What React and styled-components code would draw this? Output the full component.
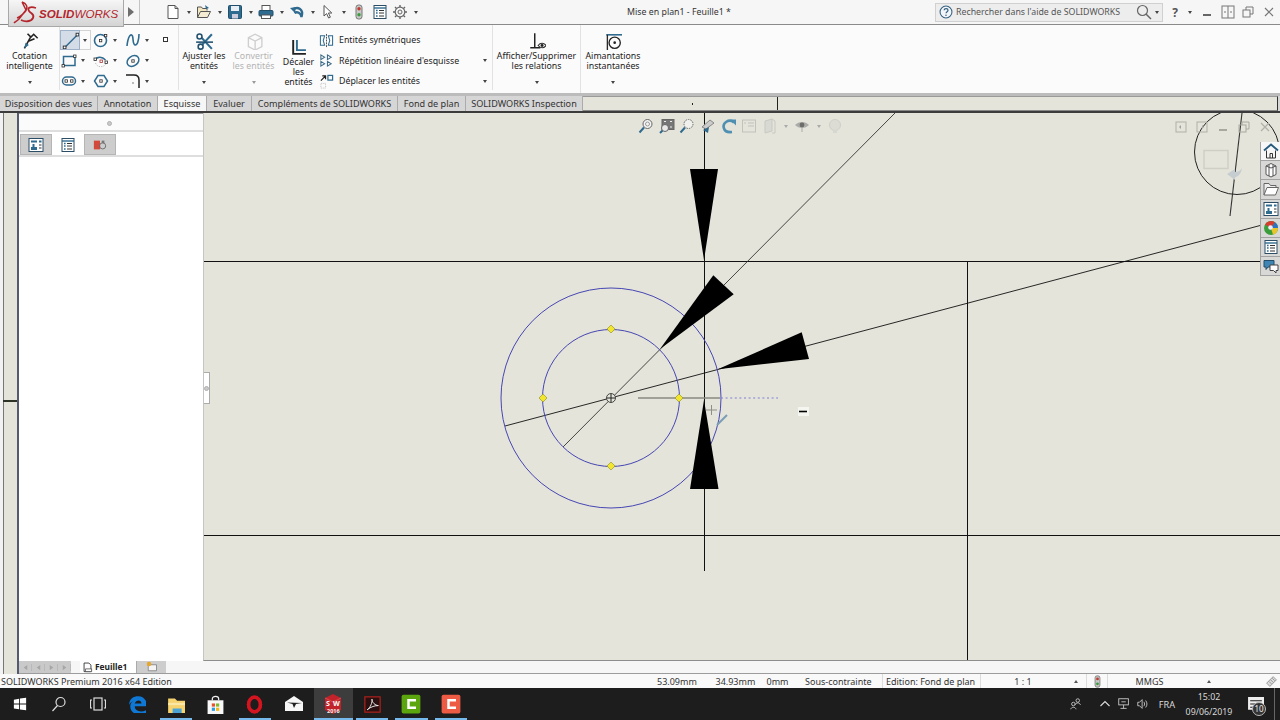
import React from 'react'
import styled, { createGlobalStyle } from 'styled-components'

const UI_FONT = '"Noto Sans", "Open Sans", "Liberation Sans", sans-serif'
const TEAL = '#2f6a8f'
const INK = '#2a2a2a'

const Global = createGlobalStyle`
  html, body { margin: 0; padding: 0; background: #1c1c1c; }
  #root { width: 1280px; height: 720px; }
  * { box-sizing: border-box; }
`

const Page = styled.div`
  width: 1280px;
  height: 720px;
  overflow: hidden;
  display: flex;
  flex-direction: column;
  font-family: ${UI_FONT};
  font-size: 8.8px;
  color: #222;
  background: #f4f4f4;
`

const Glyph = styled.svg.attrs(p => ({ viewBox: p.$box || '0 0 16 16', fill: 'none' }))`
  width: ${p => p.$size || 16}px;
  height: ${p => p.$size || 16}px;
  flex: none;
  display: block;
  opacity: ${p => p.$fade || 1};
`

const Caret = styled.span`
  flex: none;
  width: 0;
  height: 0;
  border-left: 2.5px solid transparent;
  border-right: 2.5px solid transparent;
  border-top: 3px solid ${p => p.$color || '#444'};
`

const CaretUp = styled(Caret)`
  border-top: 0;
  border-bottom: 3px solid #555;
`

/* title bar */
const TitleBar = styled.header`
  height: 25px;
  flex: none;
  display: flex;
  align-items: center;
  background: #f6f6f6;
  border-bottom: 1px solid #8a8a8a;
  padding-left: 8px;
`

const LogoTab = styled.div`
  width: 116px;
  height: 27px;
  flex: none;
  align-self: flex-start;
  display: flex;
  align-items: center;
  gap: 2px;
  padding-left: 4px;
  background: linear-gradient(#f6f6f6, #d4d4d4);
  border: 1px solid #a8a8a8;
  border-top: 0;
  position: relative;
  z-index: 2;
`

const LogoText = styled.span`
  font-family: "Liberation Sans", sans-serif;
  font-style: italic;
  font-size: 11.6px;
  color: #b3262c;
  b { font-weight: 700; }
`

const ExpandArrow = styled.div`
  width: 0;
  height: 0;
  flex: none;
  margin-left: 4px;
  border-left: 6px solid #6e6e6e;
  border-top: 5px solid transparent;
  border-bottom: 5px solid transparent;
`

const GripLine = styled.div`
  width: 1px;
  height: 24px;
  flex: none;
  margin-left: 5px;
  background: #c4c4c4;
`

const QuickBar = styled.div`
  width: 283px;
  flex: none;
  display: flex;
  align-items: center;
  padding-left: 25px;
`

const QuickItem = styled.div`
  width: ${p => p.$w || 31.3}px;
  display: flex;
  align-items: center;
  justify-content: space-between;
  padding-right: ${p => p.$caret ? 5 : 0}px;
`

const DocTitle = styled.div`
  width: 512px;
  flex: none;
  text-align: center;
  color: #333;
`

const SearchBox = styled.div`
  width: 228px;
  height: 19px;
  flex: none;
  display: flex;
  align-items: center;
  gap: 3px;
  padding: 0 3px;
  background: #ededed;
  border: 1px solid #d0d0d0;
  color: #555;
`

const SearchLabel = styled.span`
  flex: 1;
  white-space: nowrap;
`

const WinButtons = styled.div`
  display: flex;
  align-items: center;
`

const WinSlot = styled.div`
  width: ${p => p.$w || 20.5}px;
  height: 20px;
  flex: none;
  display: flex;
  align-items: center;
  justify-content: center;
  color: #555;
  font-weight: 700;
  font-size: 12px;
`

/* ribbon */
const Ribbon = styled.div`
  height: 68px;
  flex: none;
  display: flex;
  background: #fbfbfb;
`

const ColumnButton = styled.div`
  width: ${p => p.$w}px;
  flex: none;
  display: flex;
  flex-direction: column;
  align-items: center;
  padding-top: ${p => p.$top || 7}px;
  padding-bottom: 9px;
  line-height: 10px;
  text-align: center;
  white-space: nowrap;
  color: ${p => p.$muted ? '#b4b4b4' : '#222'};
  border-right: ${p => p.$divider ? '1px solid #e2e2e2' : '0'};
  ${Caret} { margin-top: auto; }
`

const ButtonLabel = styled.span`
  margin-top: 1px;
`

const SketchGrid = styled.div`
  width: 120px;
  flex: none;
  display: grid;
  grid-template-columns: 32px 32px 32px 16px;
  grid-auto-rows: 20.5px;
  padding-top: 5px;
  border-left: 1px solid #e2e2e2;
  border-right: 1px solid #e2e2e2;
  margin-bottom: 3px;
`

const ToolCell = styled.div`
  display: flex;
  align-items: center;
  gap: 4px;
  padding-left: ${p => p.$pad || 1}px;
`

const ActiveTool = styled.div`
  width: 20px;
  height: 20px;
  margin-left: -1px;
  display: flex;
  align-items: center;
  justify-content: center;
  background: #d3dce7;
  border: 1px solid #9db2c8;
`

const CaretBox = styled.div`
  width: 11px;
  height: 20px;
  display: flex;
  align-items: center;
  justify-content: center;
  margin-left: -4px;
  border: 1px solid #d4d4d4;
  border-left: 0;
`

const ToolList = styled.div`
  width: 174px;
  flex: none;
  padding-top: 5px;
  border-right: 1px solid #e2e2e2;
  margin-bottom: 3px;
`

const ToolRow = styled.div`
  height: 20.5px;
  display: flex;
  align-items: center;
  gap: 5px;
  padding-right: 5px;
  white-space: nowrap;
  ${Caret} { margin-left: auto; }
`

/* command manager tabs */
const TabStrip = styled.nav`
  height: 20px;
  flex: none;
  display: flex;
  background: #d6d6d6;
  border-top: 3px solid #bcbcbc;
  border-bottom: 2px solid #3c3c3c;
  font-size: 9.1px;
`

const Tab = styled.div`
  width: ${p => p.$w}px;
  flex: none;
  display: flex;
  align-items: center;
  justify-content: center;
  white-space: nowrap;
  color: #333;
  background: ${p => p.$active ? '#f6f6f6' : '#d6d6d6'};
  border-right: 1px solid #ababab;
`

const TabFiller = styled.div`
  width: 695px;
  flex: none;
  display: flex;
  align-items: center;
  background: #e4e4da;
  border-top: 1px solid #9a9a9a;
  border-right: 1px solid #333;
  border-bottom: 1px solid #888;
`

const Tick = styled.span`
  width: 1px;
  height: 2px;
  margin-left: 109px;
  background: #222;
`

const StripLine = styled.span`
  width: 1px;
  align-self: stretch;
  margin-left: 84px;
  background: #222;
`

/* workspace */
const Workspace = styled.div`
  height: 561px;
  flex: none;
  display: flex;
`

const DockRail = styled.div`
  width: 19px;
  flex: none;
  padding-top: 287px;
  background: #e4e4da;
  border-left: 3px solid #f2f2f2;
  box-shadow: inset 1px 0 0 #777;
  border-right: 2px solid #555a70;
`

const RailMark = styled.div`
  height: 2px;
  background: #2d3326;
`

const WorkColumn = styled.div`
  flex: 1;
  display: flex;
  flex-direction: column;
  min-width: 0;
`

const WorkRow = styled.div`
  height: 548px;
  flex: none;
  display: flex;
`

const Panel = styled.aside`
  width: 184px;
  flex: none;
  background: #fff;
  border-top: 1px solid #9a9a9a;
`

const PanelGrip = styled.div`
  height: 18px;
  display: flex;
  align-items: flex-end;
  justify-content: center;
  padding: 0 4px 4px 0;
  background: #fbfbfb;
  border-bottom: 2px solid #dedede;
`

const Dot = styled.span`
  width: 5px;
  height: 5px;
  border-radius: 50%;
  background: #c9c9c9;
  border: 1px solid #b0b0b0;
`

const PanelTabs = styled.div`
  height: 25px;
  display: flex;
  padding: 2px 0 0 1px;
  border-bottom: 2px solid #dedede;
`

const PanelTab = styled.div`
  width: 32px;
  display: flex;
  align-items: center;
  justify-content: center;
  background: ${p => p.$on ? '#fff' : '#cdcdcd'};
  border: 1px solid ${p => p.$on ? '#fff' : '#b5b5b5'};
`

const Canvas = styled.main`
  position: relative;
  flex: 1;
  min-width: 0;
  background: #e4e4da;
  border-left: 1px solid #c6c6c0;
  border-bottom: 1px solid #8d8d8d;
  overflow: hidden;
`

const Sketch = styled.svg`
  display: block;
  width: 1076px;
  height: 547px;
`

const ViewBar = styled.div`
  position: absolute;
  top: 5px;
  left: 432px;
  display: flex;
  align-items: center;
`

const ViewSlot = styled.div`
  width: ${p => p.$w || 20.6}px;
  height: 16px;
  display: flex;
  align-items: center;
  justify-content: center;
`

const ViewControls = styled.div`
  position: absolute;
  top: 4px;
  right: 5px;
  display: flex;
`

const RightTabs = styled.div`
  position: absolute;
  top: 29px;
  right: 0;
  width: 20px;
`

const RightTab = styled.div`
  height: 19.2px;
  display: flex;
  align-items: center;
  justify-content: center;
  background: ${p => p.$on ? '#f7f7f7' : '#d8d8d6'};
  border: 1px solid #a2a2a2;
  border-top: 0;
  border-right: 0;
`

const SideHandle = styled.div`
  position: absolute;
  left: 0;
  top: 259px;
  width: 6px;
  height: 32px;
  display: flex;
  align-items: center;
  justify-content: center;
  background: #fff;
  border: 1px solid #ababab;
  border-left: 0;
`

const SheetBar = styled.div`
  height: 13px;
  flex: none;
  display: flex;
  align-items: stretch;
  background: #f6f6f6;
  border-bottom: 1px solid #9c9c9c;
`

const SheetNav = styled.div`
  width: 52px;
  display: flex;
  align-items: center;
  background: #c9c9c9;
  color: #a8a8a8;
`

const NavCell = styled.span`
  flex: 1;
  display: flex;
  align-items: center;
  justify-content: center;
  border-right: 1px solid #b9b9b9;
`

const SheetTab = styled.div`
  width: 56px;
  margin-left: 9px;
  display: flex;
  align-items: center;
  gap: 2px;
  padding-left: 2px;
  background: #fff;
  font-weight: 700;
  font-size: 8.4px;
  color: #222;
  line-height: 1;
`

const AddSheet = styled.div`
  width: 30px;
  display: flex;
  align-items: center;
  justify-content: center;
  background: #cdcdcd;
  border-left: 1px solid #aaa;
`

/* status bar */
const StatusBar = styled.footer`
  height: 14px;
  flex: none;
  display: flex;
  align-items: center;
  background: #f9f9f9;
  white-space: nowrap;
  color: #333;
  font-size: 9px;
`

const StatusCell = styled.div`
  width: ${p => p.$w}px;
  flex: none;
  height: 14px;
  display: flex;
  align-items: center;
  justify-content: ${p => p.$center ? 'center' : 'flex-start'};
  padding-left: ${p => p.$pad || 0}px;
  border-right: ${p => p.$line ? '1px solid #dcdcdc' : '0'};
`

/* taskbar */
const Taskbar = styled.div`
  height: 32px;
  flex: none;
  display: flex;
  align-items: stretch;
  background: #1d1d1d;
  color: #d9d9d9;
`

const TaskButton = styled.div`
  width: 39.2px;
  flex: none;
  display: flex;
  align-items: center;
  justify-content: center;
  position: relative;
  background: ${p => p.$active ? '#3d3d3d' : 'transparent'};
  &::after {
    content: '';
    display: ${p => p.$running ? 'block' : 'none'};
    position: absolute;
    left: ${p => p.$active ? 0 : 9}%;
    right: ${p => p.$active ? 0 : 9}%;
    bottom: 0;
    height: 2px;
    background: #76b9ed;
  }
`

const Tray = styled.div`
  margin-left: auto;
  display: flex;
  align-items: stretch;
`

const TraySlot = styled.div`
  width: ${p => p.$w}px;
  display: flex;
  align-items: center;
  justify-content: center;
  position: relative;
  padding-right: ${p => p.$pr || 0}px;
  font-size: 9.2px;
`

const Clock = styled.div`
  text-align: center;
  line-height: 15px;
  font-size: 8.8px;
  padding-top: 1px;
`

const Badge = styled.span`
  position: absolute;
  right: 8px;
  bottom: 4px;
  width: 14px;
  height: 14px;
  border-radius: 50%;
  background: #333;
  border: 1px solid #bbb;
  font-size: 8px;
  line-height: 12px;
  text-align: center;
  color: #eee;
`

const ShowDesktop = styled.div`
  width: 6px;
  border-left: 1px solid #666;
`

/* ---- icons ---- */
const Handle = ({ x, y, c = INK }) => <rect x={x} y={y} width="2.4" height="2.4" fill="#fff" stroke={c} strokeWidth=".8" />

const DsMark = () => (
  <Glyph $box="0 0 24 24" $size={24}>
    <path d="M9 1 L13 9 L6 18 C4 20 2 21 1 22 M9 1 C13 2 16 6 12 11 M4 17 C7 16 10 14 13 9" stroke="#b3262c" strokeWidth="1.5" />
    <path d="M23 7 C17 5 14 7 16 10 C18 13 22 13 20 17 C18 21 12 21 8 19" stroke="#b3262c" strokeWidth="1.8" />
  </Glyph>
)

const NewDoc = () => <Glyph><path d="M3 1.5h7l3 3v10H3z" fill="#fff" stroke="#555" /><path d="M10 1.5v3h3" stroke="#555" /></Glyph>
const OpenFile = () => <Glyph><path d="M1.5 13.5V3h4l1 1.5H11v2" fill="#f3e7c2" stroke="#555" /><path d="M1.5 13.5l3-6h10l-3 6z" fill="#f5edd3" stroke="#555" /><path d="M9 1l4 3-3 1z" fill={TEAL} /></Glyph>
const SaveFile = () => <Glyph><rect x="1.5" y="1.5" width="13" height="13" rx="1" fill={TEAL} stroke="#234e6a" /><rect x="4" y="2" width="8" height="5" fill="#e8eef3" /><rect x="5" y="10" width="6" height="4.5" fill="#ccd" /></Glyph>
const PrintFile = () => <Glyph><rect x="4" y="1.5" width="8" height="5" fill="#fff" stroke="#555" /><rect x="1" y="6.5" width="14" height="5.5" rx="1" fill={TEAL} stroke="#234e6a" /><rect x="3.5" y="11" width="9" height="3.5" fill="#fff" stroke="#555" /></Glyph>
const UndoArrow = () => <Glyph><path d="M3.5 5.5 C9 2 15 5 12.5 13 C12 9 8 7 5.5 9" stroke={TEAL} strokeWidth="2.4" /><path d="M1 4l6-1-1 6z" fill={TEAL} /></Glyph>
const Pointer = () => <Glyph><path d="M4 1.5v10.5l2.6-2.4 2 4.4 1.8-.8-2-4.2h3.4z" fill="#fff" stroke="#555" /></Glyph>
const Traffic = ({ size = 16 }) => <Glyph $size={size}><rect x="5" y="1" width="6" height="14" rx="2.5" fill="#c8c8c8" stroke="#777" /><circle cx="8" cy="4.8" r="1.7" fill="#c43a2f" /><circle cx="8" cy="10.8" r="1.7" fill="#3a9d3c" /></Glyph>
const ListDoc = () => <Glyph><rect x="2" y="1.5" width="12" height="13" fill="#fff" stroke="#2c4d66" /><path d="M2 4h12" stroke={TEAL} strokeWidth="1.4" /><path d="M7 6.5h5M7 9h5M7 12h5" stroke="#333" /><path d="M4 6.5h1.6M4 9h1.6M4 12h1.6" stroke={TEAL} strokeWidth="1.4" /></Glyph>
const Gear = () => <Glyph><circle cx="8" cy="8" r="4.8" stroke="#666" strokeWidth="1.2" /><circle cx="8" cy="8" r="2" stroke="#666" /><path d="M8 1v2M8 13v2M1 8h2M13 8h2M3 3l1.5 1.5M13 3l-1.5 1.5M3 13l1.5-1.5M13 13l-1.5-1.5" stroke="#666" strokeWidth="1.4" /></Glyph>
const HelpMark = () => <Glyph $size={14}><circle cx="8" cy="8" r="6.8" fill="#f2f6fa" stroke="#35607e" strokeWidth="1.2" /><path d="M5.8 6c.3-2.6 4.5-2.4 4.5 0 0 1.7-2.2 1.6-2.2 3.4" stroke="#35607e" strokeWidth="1.4" /><circle cx="8" cy="11.8" r=".9" fill="#35607e" /></Glyph>
const Magnifier = () => <Glyph><circle cx="6.5" cy="6.5" r="5" stroke="#666" strokeWidth="1.2" /><path d="M10 10l5 5" stroke="#666" strokeWidth="1.5" /></Glyph>
const Minimize = ({ c = '#666' }) => <Glyph $size={12} $box="0 0 12 12"><path d="M2 9h8" stroke={c} strokeWidth="2" /></Glyph>
const PinBox = ({ c = '#777' }) => <Glyph $size={14} $box="0 0 14 14"><rect x="1" y="1" width="12" height="12" stroke={c} /><path d="M7 1v12M3 7h2M9 7h2" stroke={c} /></Glyph>
const Restore = ({ c = '#777' }) => <Glyph $size={12} $box="0 0 12 12"><rect x="1" y="4" width="7" height="7" stroke={c} /><path d="M4 4V1h7v7H8" stroke={c} /></Glyph>
const CloseX = ({ c = '#777' }) => <Glyph $size={12} $box="0 0 12 12"><path d="M2 2l8 8M10 2l-8 8" stroke={c} strokeWidth="1.2" /></Glyph>

const Cotation = () => <Glyph $size={18}><path d="M3 14.5L8.5 4.5M5.8 1.5l3 3 2.5-2.5 3.5 3.5" stroke="#222" strokeWidth="1.4" /><path d="M3 14.5l1-5 3 2z" fill={TEAL} /><path d="M7 8l5-2" stroke="#222" strokeWidth="1.6" /></Glyph>
const LineTool = () => <Glyph $size={18}><path d="M4 14L14 4" stroke={TEAL} strokeWidth="1.2" /><Handle x="2" y="13.4" /><Handle x="13.4" y="2" /></Glyph>
const CircleTool = () => <Glyph><circle cx="7.5" cy="8.5" r="6" stroke={TEAL} strokeWidth="1.6" /><Handle x="6.4" y="7.4" /><Handle x="11.4" y="2.4" /></Glyph>
const SplineTool = () => <Glyph><path d="M2 14C3 4 6 1 7.5 4c1 3 0 8 2.5 9 2.4.8 4-6 4-11" stroke={TEAL} strokeWidth="1.6" /></Glyph>
const SquareNub = () => <Glyph $size={8} $box="0 0 8 8"><rect x="1.5" y="1.5" width="4" height="4" fill="#fff" stroke="#333" /></Glyph>
const RectTool = () => <Glyph><rect x="2.5" y="3.5" width="11.5" height="9" stroke={TEAL} strokeWidth="1.5" /><Handle x="1" y="11.6" /><Handle x="12.6" y="2" /></Glyph>
const ArcTool = () => <Glyph><path d="M2 7C4 3.5 9 3 12.5 7" stroke={TEAL} strokeWidth="1.5" /><path d="M2.5 10C4 14.5 10 15 13 11" stroke="#bbb" strokeDasharray="1.2 1.2" /><Handle x="1" y="5" /><Handle x="7" y="7" c="#a33" /><Handle x="12" y="8" /></Glyph>
const EllipseTool = () => <Glyph><ellipse cx="8" cy="8" rx="6.4" ry="4.8" transform="rotate(-35 8 8)" stroke={TEAL} strokeWidth="1.5" /><Handle x="6.8" y="6.8" /></Glyph>
const SlotTool = () => <Glyph><rect x="1.5" y="4" width="13" height="8" rx="4" stroke={TEAL} strokeWidth="1.5" /><Handle x="4" y="6.8" /><Handle x="9.6" y="6.8" /></Glyph>
const HexTool = () => <Glyph><path d="M5 2.5h6l3.5 5.5-3.500 5.500H5L1.500 8z" stroke={TEAL} strokeWidth="1.5" /><Handle x="6.8" y="6.8" /></Glyph>
const FilletTool = () => <Glyph><path d="M1 2h8c3 0 5 2 5 5v8" stroke="#222" strokeWidth="1.5" /><path d="M7 9l2 2M9 9l-2 2" stroke="#bbb" /></Glyph>
const TrimTool = () => <Glyph $size={18}><path d="M3 2l12 13M15 2L3 15" stroke={TEAL} strokeWidth="1.8" /><circle cx="4" cy="4" r="2.2" fill="#fff" stroke="#23516e" strokeWidth="1.4" /><circle cx="5" cy="13" r="2.2" fill="#fff" stroke="#23516e" strokeWidth="1.4" /><path d="M1 9h15" stroke="#23516e" strokeWidth="1.4" /></Glyph>
const ConvertTool = () => <Glyph $size={18}><path d="M3 5l6-3 6 3v8l-6 3-6-3zM3 5l6 3 6-3M9 8v8" stroke="#cfcfcf" strokeWidth="1.2" /></Glyph>
const OffsetTool = () => <Glyph $size={17}><path d="M3 1v13h12" stroke="#222" strokeWidth="1.8" /><path d="M6.5 1v9.5H15" stroke={TEAL} strokeWidth="1.8" /></Glyph>
const MirrorTool = () => <Glyph $size={15}><path d="M8 1v14" stroke="#444" strokeDasharray="2 1" /><path d="M6 3H1.500v10H6l-1.500-5zM10 3h4.500v10H10l1.500-5z" stroke={TEAL} strokeWidth="1.1" /></Glyph>
const PatternTool = () => <Glyph $size={15}><path d="M2 2l4 2.5L2 7zM9 2l4 2.5L9 7zM2 9l4 2.5L2 14zM9 9l4 2.5L9 14z" stroke="#3c6a86" strokeWidth="1.1" /></Glyph>
const MoveTool = () => <Glyph $size={15}><path d="M2 7l5-5M3.5 2H7v3.5" stroke="#222" strokeWidth="1.3" /><rect x="9.5" y="1.5" width="5" height="5" stroke={TEAL} strokeWidth="1.3" /><path d="M2 10h5v5H2z" stroke="#bbb" strokeDasharray="1 1" /></Glyph>
const RelationsTool = () => <Glyph $size={18}><path d="M6 1v13M2 14h9" stroke="#222" strokeWidth="1.3" /><path d="M9 12c2-2.6 5-2.6 7 0-2 2.6-5 2.600-7 0z" stroke="#333" /><circle cx="12.5" cy="12" r="1.3" fill="#222" /></Glyph>
const SnapTool = () => <Glyph $size={18}><path d="M2 2.5h14" stroke={TEAL} strokeWidth="1.4" /><path d="M3 2.5V16" stroke="#2a2a2a" strokeWidth="1.2" /><circle cx="9.5" cy="9.5" r="5" stroke="#222" strokeWidth="1.2" /><circle cx="9.5" cy="9.5" r="1.2" fill="#222" /></Glyph>

const ZoomFit = () => <Glyph><circle cx="9.5" cy="6" r="4.5" fill="#f4f4f4" stroke="#666" /><circle cx="9.5" cy="6" r="2" stroke="#999" /><path d="M6 9.5l-4.5 5" stroke={TEAL} strokeWidth="2" /></Glyph>
const ZoomArea = () => <Glyph><rect x="3" y="1.5" width="12" height="10" fill="#777" stroke="#666" /><path d="M5 3.5h2M13 3.5h-2M5 9h2M13 9h-2" stroke="#eee" /><circle cx="6" cy="10" r="3.5" fill="#e9e9e9" stroke="#666" /><path d="M3.5 12.5L1 15" stroke={TEAL} strokeWidth="2" /></Glyph>
const ZoomPrev = () => <Glyph><circle cx="9.5" cy="6" r="4.5" fill="#f0f0ec" stroke="#666" strokeDasharray="1.5 1" /><path d="M6 9.5l-4.5 5" stroke={TEAL} strokeWidth="2" /></Glyph>
const Section = () => <Glyph><path d="M2 9l8-7 4 3-8 6z" fill="#ccc" stroke="#888" /><path d="M3 12l6-3-1 6z" fill={TEAL} /></Glyph>
const Rotate = () => <Glyph><path d="M13 4.5C8 0 1 5 3 10.5c1 3 4 4 8 3.5" stroke="#4f8fb1" strokeWidth="2.6" /><path d="M9 1.5h6v6z" fill="#4f8fb1" /></Glyph>
const PaleSheet = () => <Glyph $fade=".45"><rect x="1.5" y="2" width="13" height="12" stroke="#999" /><path d="M7 5h6M7 8h6M3 5h2" stroke="#999" /></Glyph>
const PaleBox = () => <Glyph $fade=".45"><path d="M3 3l7-2v12l-7 2z" fill="#ccc" stroke="#aaa" /><path d="M10 1l3 2v12h-3" stroke="#aaa" /></Glyph>
const Eye = () => <Glyph $fade=".75"><path d="M1 7c4-4 10-4 14 0-4 4-10 4-14 0z" fill="#999" /><circle cx="8" cy="7" r="2.4" fill="#444" /><path d="M8 9v5" stroke="#999" /></Glyph>
const Bulb = () => <Glyph $fade=".5"><circle cx="8" cy="7" r="5.5" fill="#d6d6d0" stroke="#bbb" /><rect x="6" y="12" width="4" height="3" fill="#ccc" /></Glyph>

const HomeTab = () => <Glyph><path d="M1 7.5L8 1.5l7 6" stroke="#255a7d" strokeWidth="1.8" /><path d="M3.5 7.5V15h9V7.5M7 15v-4.5h2.5V15" stroke="#333" /></Glyph>
const PartsTab = () => <Glyph><path d="M3 4l5-2.5L13 4v8.5L8 15l-5-2.5z" fill="#fff" stroke="#555" /><path d="M6 3v11M10 3v11M3 4l5 2 5-2" stroke="#555" /></Glyph>
const FolderTab = () => <Glyph><path d="M1 14V2.5h5l1.5 2H13v2" fill="#eee" stroke="#666" /><path d="M1 14l3-7.5h11.5l-3 7.500z" fill="#fff" stroke="#666" /></Glyph>
const PaletteTab = () => <Glyph><rect x="1" y="1.5" width="14" height="13" fill="#fff" stroke="#2c4d66" /><rect x="3" y="3.5" width="6" height="2" fill={TEAL} /><rect x="11" y="3.5" width="2.5" height="2" fill={TEAL} /><path d="M5.5 7v3" stroke={TEAL} strokeWidth="2" /><rect x="3" y="10" width="6" height="3" fill={TEAL} /><path d="M11 8h2.5M11 11h2.5" stroke="#333" /></Glyph>
const BallTab = () => (
  <Glyph>
    <circle cx="8" cy="8" r="7" fill="#3a9d3c" />
    <path d="M8 8L2 4.5A7 7 0 0 1 12 2.3z" fill="#d63b2f" />
    <path d="M8 8l4-5.7A7 7 0 0 1 15 8z" fill="#2f6fc4" />
    <path d="M8 8h7A7 7 0 0 1 10 14.7z" fill="#e8c52a" />
    <circle cx="7.5" cy="7.5" r="2.3" fill="#eef" />
  </Glyph>
)
const ChatTab = () => <Glyph><path d="M1 2.5h10V9H5l-2 2.5V9H1z" fill="#3f86b5" stroke="#234e6a" /><path d="M7 7h8v5.500h-2V15l-2.500-2.500H7z" fill="#fff" stroke="#444" /></Glyph>
const LockDoc = () => <Glyph $size={14}><rect x="1" y="3" width="7" height="10" fill="#d34a3c" /><circle cx="11" cy="9" r="3.5" stroke="#666" /><path d="M10 3h3v3h-3z" fill="#777" /></Glyph>

const NavArrow = ({ flip }) => <Glyph $size={7} $box="0 0 8 8"><path d={flip ? 'M2 1l4 3-4 3z' : 'M6 1L2 4l4 3z'} fill="#a6a6a6" /></Glyph>
const SheetDoc = () => <Glyph $size={11}><path d="M3 1.5h7l3 3V14H3z" stroke="#333" strokeWidth="1.3" /><path d="M5 10h9v4H5z" fill="#fff" stroke="#333" /></Glyph>
const SheetAdd = () => <Glyph $size={12}><path d="M3 5h11v8H3z" fill="#f4f4f4" stroke="#777" /><circle cx="4" cy="4" r="3" fill="#e6a72c" /></Glyph>
const Grip = () => <Glyph $size={13}><path d="M2 10l8-8 4 4-8 8z" fill="#ddd" stroke="#888" /><path d="M5 8l3 3M7 6l3 3M9 4l3 3" stroke="#888" /></Glyph>

const WinLogo = () => <Glyph $size={14}><path d="M1 3l6-1v5.5H1zM8 1.800l7-1v6.700H8zM1 8.500h6V14l-6-1zM8 8.500h7v6.700l-7-1z" fill="#fff" /></Glyph>
const TaskSearch = () => <Glyph><circle cx="9.5" cy="6" r="4.5" stroke="#ddd" strokeWidth="1.2" /><path d="M6.5 9.5L1.5 15" stroke="#ddd" strokeWidth="1.2" /></Glyph>
const TaskView = () => <Glyph><rect x="4" y="2" width="8" height="12" stroke="#ddd" strokeWidth="1.2" /><path d="M2 4H.5v8H2M14 4h1.5v8H14" stroke="#ddd" strokeWidth="1.2" /></Glyph>
const EdgeLogo = () => <Glyph $size={18}><path d="M1 9C1 3 5 1 9 1c5 0 8 4 8 9H6c0 4 5 6 10 3.5V16c-6 3-14 1-14-6 0-2 1-3.5 3-5-1.500 1-4 2.500-4 4zM6 7.500h6C12 4 7 4 6 7.500z" fill="#0f78d4" /></Glyph>
const FolderLogo = () => <Glyph $size={18}><path d="M1 3h6l2 2h8v11H1z" fill="#f6d36f" /><path d="M1 7h16v2H1z" fill="#fbe7a5" /><path d="M5 12h8v4H5z" fill="#4aa4d8" /></Glyph>
const StoreLogo = () => <Glyph $size={19} $box="0 0 18 18"><path d="M6 5V3.500C6 .5 12 .5 12 3.500V5" stroke="#eee" strokeWidth="1.2" /><rect x="1.5" y="5" width="15" height="13" fill="#f8f8f8" /><rect x="5.5" y="8" width="3" height="3" fill="#e5522b" /><rect x="9.5" y="8" width="3" height="3" fill="#7fb92f" /><rect x="5.5" y="12" width="3" height="3" fill="#2b9ce0" /><rect x="9.5" y="12" width="3" height="3" fill="#f5b81a" /></Glyph>
const OperaLogo = () => <Glyph $size={19} $box="0 0 18 18"><ellipse cx="9" cy="9" rx="6.800" ry="7.600" stroke="#d4141f" strokeWidth="1" /><ellipse cx="9" cy="9" rx="5.600" ry="7" stroke="#d4141f" strokeWidth="3.4" /></Glyph>
const MailLogo = () => <Glyph $size={20} $box="0 0 20 20"><path d="M1 8L10 2l9 6v9H1z" fill="#f6f6f6" /><path d="M3 8.500l15 .5-6 1-2 4-1.500-4z" fill="#1d1d1d" /></Glyph>
const SwLogo = () => (
  <Glyph $box="0 0 22 22" $size={22}>
    <path d="M3 5l8-4 8 4v12l-8 4-8-4z" fill="#c2232b" />
    <path d="M3 5l8 4 8-4" stroke="#e66" strokeWidth=".6" />
    <text x="4" y="13" fontSize="7" fontWeight="700" fill="#fff" fontFamily={UI_FONT}>S</text>
    <text x="11" y="13" fontSize="7" fontWeight="700" fill="#fff" fontFamily={UI_FONT}>W</text>
    <text x="5" y="19.5" fontSize="5.5" fontWeight="700" fill="#eee" fontFamily={UI_FONT}>2016</text>
  </Glyph>
)
const AcrobatLogo = () => <Glyph $size={17}><rect x=".8" y=".8" width="14.4" height="14.4" fill="#2a1010" stroke="#a5211d" strokeWidth="1.2" /><path d="M3 13c3-2 5-7 4.500-10 0 3 3 6 6 6-3 0-7 1-10.500 4z" stroke="#eee" strokeWidth=".9" /></Glyph>
const CamLogo = ({ bg, light }) => (
  <Glyph $size={20}>
    <rect x=".5" y=".5" width="15" height="15" rx="1.5" fill={bg} />
    <path d="M5 4h7v2H7v4h5v2H5z" fill={light} />
  </Glyph>
)
const PeopleIcon = () => <Glyph $size={14}><circle cx="10" cy="4" r="2" stroke="#ccc" /><path d="M7 9c.5-3 5.500-3 6 0" stroke="#ccc" /><circle cx="5" cy="8" r="2" stroke="#ccc" /><path d="M2 14c.5-3 5.500-3 6 0" stroke="#ccc" /></Glyph>
const Chevron = () => <Glyph $size={12} $box="0 0 12 12"><path d="M1.5 8L6 3.5 10.5 8" stroke="#ddd" strokeWidth="1.1" /></Glyph>
const NetIcon = () => <Glyph $size={14}><rect x="2" y="2" width="11" height="7" stroke="#ccc" /><path d="M7.5 9v4M4 13h7M5 5.500h5" stroke="#ccc" /></Glyph>
const VolumeIcon = () => <Glyph $size={14}><path d="M2 6h2l3-3v10l-3-3H2z" stroke="#ccc" /><path d="M9 5.500c1 1.500 1 3.500 0 5M11 4c2 2.500 2 5.500 0 8" stroke="#ccc" /></Glyph>
const NoteIcon = () => <Glyph $size={17}><path d="M1 1h15v12h-4l-3 3v-3H1z" fill="#eee" /><path d="M3 4.500h11M3 7.500h11M3 10.500h7" stroke="#1d1d1d" /></Glyph>

const CX = 611
const CY = 398
const handlePoints = [[611, 329], [543, 398], [679, 398], [611, 466]]

// the drawing sheet, in page coordinates so the numbers stay readable
const SketchArea = () => (
  <Sketch viewBox="204 113 1076 547">
    <path d="M203 261.5H1280M203 535.5H1280" stroke="#111" />
    <path d="M704.5 113V571M967.5 261V661" stroke="#111" />
    <path d="M563 447L895 113" stroke="#333" strokeWidth=".9" />
    <path d="M505 426L1262 225" stroke="#111" strokeWidth=".9" />
    <circle cx={CX} cy={CY} r="110" stroke="#4646b4" fill="none" />
    <circle cx={CX} cy={CY} r="68.5" stroke="#4646b4" fill="none" />
    <path d="M638 398H720" stroke="#8a8a82" strokeWidth="1.5" />
    <path d="M721 398H778" stroke="#7c7cd6" strokeWidth="1.2" strokeDasharray="2 2.6" />
    <circle cx={CX} cy={CY} r="4.5" fill="#e4e4da" stroke="#444" />
    <path d="M607 398h8M611 394v8" stroke="#222" />
    {handlePoints.map(([x, y]) => (
      <path key={x + '-' + y} d={`M${x} ${y - 4}l4 4-4 4-4-4z`} fill="#f3e62e" stroke="#8a8a22" strokeWidth=".6" />
    ))}
    <path d="M690 169H718L704 260z" fill="#000" />
    <path d="M704 400L718.5 489H690z" fill="#000" />
    <path d="M660 349L713.3 275.3 733.7 294.3z" fill="#000" />
    <path d="M717.7 369.3L801.7 332.3 809 359z" fill="#000" />
    <path d="M706 410h11M711.500 405v10" stroke="#8f8f88" />
    <path d="M717 425l10-10" stroke="#7a9db5" strokeWidth="2" />
    <rect x="798" y="407" width="11" height="9" fill="#f6f6f0" />
    <path d="M799 411.5h8" stroke="#000" strokeWidth="1.6" />
    <circle cx="1237" cy="152" r="42.5" stroke="#222" fill="none" />
    <path d="M1242 113L1230 216" stroke="#333" strokeWidth="1.1" />
    <rect x="1204" y="150.5" width="24" height="18" stroke="#cfcfc6" strokeWidth="1.5" fill="none" />
    <path d="M1227 174l8-5v3c3 0 5-1 7-4-1 6-4 9-7 9v3z" fill="#c6cdd0" />
  </Sketch>
)

const quickIcons = [NewDoc, OpenFile, SaveFile, PrintFile, UndoArrow, Pointer]
const tabs = [
  ['Disposition des vues', 98],
  ['Annotation', 60],
  ['Esquisse', 49, true],
  ['Evaluer', 45],
  ['Compléments de SOLIDWORKS', 146],
  ['Fond de plan', 68],
  ['SOLIDWORKS Inspection', 117]
]
const rightTabIcons = [HomeTab, PartsTab, FolderTab, PaletteTab, BallTab, ListDoc, ChatTab]

const App = () => (
  <Page>
    <Global />
    <TitleBar>
      <LogoTab>
        <DsMark />
        <LogoText><b>SOLID</b>WORKS</LogoText>
      </LogoTab>
      <ExpandArrow />
      <GripLine />
      <QuickBar>
        {quickIcons.map((Icon, i) => (
          <QuickItem key={i} $caret><Icon /><Caret /></QuickItem>
        ))}
        <QuickItem $w={21}><Traffic /></QuickItem>
        <QuickItem $w={20}><ListDoc /></QuickItem>
        <QuickItem $caret><Gear /><Caret /></QuickItem>
      </QuickBar>
      <DocTitle>Mise en plan1 - Feuille1 *</DocTitle>
      <SearchBox>
        <HelpMark />
        <SearchLabel>Rechercher dans l'aide de SOLIDWORKS</SearchLabel>
        <Magnifier />
        <Caret />
      </SearchBox>
      <WinButtons>
        <WinSlot $w={24}>?</WinSlot>
        <WinSlot $w={6}><Caret /></WinSlot>
        <WinSlot $w={28}><Minimize /></WinSlot>
        <WinSlot $w={14}><PinBox /></WinSlot>
        <WinSlot $w={26}><Restore /></WinSlot>
        <WinSlot $w={16}><CloseX /></WinSlot>
      </WinButtons>
    </TitleBar>

    <Ribbon>
      <ColumnButton $w={59}>
        <Cotation />
        <ButtonLabel>Cotation<br />intelligente</ButtonLabel>
        <Caret />
      </ColumnButton>
      <SketchGrid>
        <ToolCell>
          <ActiveTool><LineTool /></ActiveTool>
          <CaretBox><Caret /></CaretBox>
        </ToolCell>
        <ToolCell><CircleTool /><Caret /></ToolCell>
        <ToolCell><SplineTool /><Caret /></ToolCell>
        <ToolCell $pad={6}><SquareNub /></ToolCell>
        <ToolCell><RectTool /><Caret /></ToolCell>
        <ToolCell><ArcTool /><Caret /></ToolCell>
        <ToolCell><EllipseTool /><Caret /></ToolCell>
        <ToolCell />
        <ToolCell><SlotTool /><Caret /></ToolCell>
        <ToolCell><HexTool /><Caret /></ToolCell>
        <ToolCell><FilletTool /><Caret /></ToolCell>
      </SketchGrid>
      <ColumnButton $w={50}>
        <TrimTool />
        <ButtonLabel>Ajuster les<br />entités</ButtonLabel>
        <Caret />
      </ColumnButton>
      <ColumnButton $w={49} $muted>
        <ConvertTool />
        <ButtonLabel>Convertir<br />les entités</ButtonLabel>
        <Caret $color="#999" />
      </ColumnButton>
      <ColumnButton $w={41} $top={14}>
        <OffsetTool />
        <ButtonLabel>Décaler<br />les<br />entités</ButtonLabel>
      </ColumnButton>
      <ToolList>
        <ToolRow><MirrorTool />Entités symétriques</ToolRow>
        <ToolRow><PatternTool />Répétition linéaire d'esquisse<Caret /></ToolRow>
        <ToolRow><MoveTool />Déplacer les entités<Caret /></ToolRow>
      </ToolList>
      <ColumnButton $w={88} $divider>
        <RelationsTool />
        <ButtonLabel>Afficher/Supprimer<br />les relations</ButtonLabel>
        <Caret />
      </ColumnButton>
      <ColumnButton $w={64}>
        <SnapTool />
        <ButtonLabel>Aimantations<br />instantanées</ButtonLabel>
        <Caret />
      </ColumnButton>
    </Ribbon>

    <TabStrip>
      {tabs.map(([label, w, active]) => (
        <Tab key={label} $w={w} $active={active}>{label}</Tab>
      ))}
      <TabFiller>
        <Tick />
        <StripLine />
      </TabFiller>
    </TabStrip>

    <Workspace>
      <DockRail><RailMark /></DockRail>
      <WorkColumn>
        <WorkRow>
          <Panel>
            <PanelGrip><Dot /></PanelGrip>
            <PanelTabs>
              <PanelTab><PaletteTab /></PanelTab>
              <PanelTab $on><ListDoc /></PanelTab>
              <PanelTab><LockDoc /></PanelTab>
            </PanelTabs>
          </Panel>
          <Canvas>
            <SketchArea />
            <ViewBar>
              <ViewSlot><ZoomFit /></ViewSlot>
              <ViewSlot><ZoomArea /></ViewSlot>
              <ViewSlot><ZoomPrev /></ViewSlot>
              <ViewSlot><Section /></ViewSlot>
              <ViewSlot><Rotate /></ViewSlot>
              <ViewSlot><PaleSheet /></ViewSlot>
              <ViewSlot><PaleBox /></ViewSlot>
              <ViewSlot $w={11}><Caret $color="#aaa" /></ViewSlot>
              <ViewSlot $w={22}><Eye /></ViewSlot>
              <ViewSlot $w={11}><Caret $color="#aaa" /></ViewSlot>
              <ViewSlot $w={22}><Bulb /></ViewSlot>
            </ViewBar>
            <ViewControls>
              <WinSlot $w={21}><Glyph $size={12} $box="0 0 12 12"><rect x="1" y="1" width="10" height="10" stroke="#b0b0a8" /><path d="M4 6l2-2v4z" fill="#a0a0a0" /></Glyph></WinSlot>
              <WinSlot $w={21}><Glyph $size={12} $box="0 0 12 12"><rect x="1" y="1" width="10" height="10" stroke="#b0b0a8" /><path d="M8 6L6 4v4z" fill="#a0a0a0" /></Glyph></WinSlot>
              <WinSlot $w={21}><Minimize c="#a8a8a0" /></WinSlot>
              <WinSlot $w={21}><Restore c="#a8a8a0" /></WinSlot>
              <WinSlot $w={21}><CloseX c="#b0b0a8" /></WinSlot>
            </ViewControls>
            <RightTabs>
              {rightTabIcons.map((Icon, i) => (
                <RightTab key={i} $on={i === 0}><Icon /></RightTab>
              ))}
            </RightTabs>
            <SideHandle><Dot /></SideHandle>
          </Canvas>
        </WorkRow>
        <SheetBar>
          <SheetNav>
            <NavCell><NavArrow /></NavCell>
            <NavCell><NavArrow /></NavCell>
            <NavCell><NavArrow flip /></NavCell>
            <NavCell><NavArrow flip /></NavCell>
          </SheetNav>
          <SheetTab><SheetDoc />Feuille1</SheetTab>
          <AddSheet><SheetAdd /></AddSheet>
        </SheetBar>
      </WorkColumn>
    </Workspace>

    <StatusBar>
      <StatusCell $w={657} $pad={1}>SOLIDWORKS Premium 2016 x64 Edition</StatusCell>
      <StatusCell $w={58.5}>53.09mm</StatusCell>
      <StatusCell $w={51}>34.93mm</StatusCell>
      <StatusCell $w={38.5}>0mm</StatusCell>
      <StatusCell $w={78} $line>Sous-contrainte</StatusCell>
      <StatusCell $w={98} $pad={3} $line>Edition: Fond de plan</StatusCell>
      <StatusCell $w={84} $center>1 : 1</StatusCell>
      <StatusCell $w={22} $center $line><CaretUp /></StatusCell>
      <StatusCell $w={21} $center $line><Traffic size={13} /></StatusCell>
      <StatusCell $w={83} $center>MMGS</StatusCell>
      <StatusCell $w={35} $center><CaretUp /></StatusCell>
      <StatusCell $w={37} />
      <StatusCell $w={17} $center><Grip /></StatusCell>
    </StatusBar>

    <Taskbar>
      <TaskButton><WinLogo /></TaskButton>
      <TaskButton><TaskSearch /></TaskButton>
      <TaskButton><TaskView /></TaskButton>
      <TaskButton><EdgeLogo /></TaskButton>
      <TaskButton $running><FolderLogo /></TaskButton>
      <TaskButton><StoreLogo /></TaskButton>
      <TaskButton $running><OperaLogo /></TaskButton>
      <TaskButton><MailLogo /></TaskButton>
      <TaskButton $running $active><SwLogo /></TaskButton>
      <TaskButton $running><AcrobatLogo /></TaskButton>
      <TaskButton $running><CamLogo bg="#5ba60f" light="#fff" /></TaskButton>
      <TaskButton $running><CamLogo bg="#ee5b45" light="#fff" /></TaskButton>
      <Tray>
        <TraySlot $w={31} $pr={7}><PeopleIcon /></TraySlot>
        <TraySlot $w={20}><Chevron /></TraySlot>
        <TraySlot $w={18}><NetIcon /></TraySlot>
        <TraySlot $w={19}><VolumeIcon /></TraySlot>
        <TraySlot $w={30}>FRA</TraySlot>
        <TraySlot $w={54}><Clock>15:02<br />09/06/2019</Clock></TraySlot>
        <TraySlot $w={38}><NoteIcon /><Badge>10</Badge></TraySlot>
        <ShowDesktop />
      </Tray>
    </Taskbar>
  </Page>
)

export default App
